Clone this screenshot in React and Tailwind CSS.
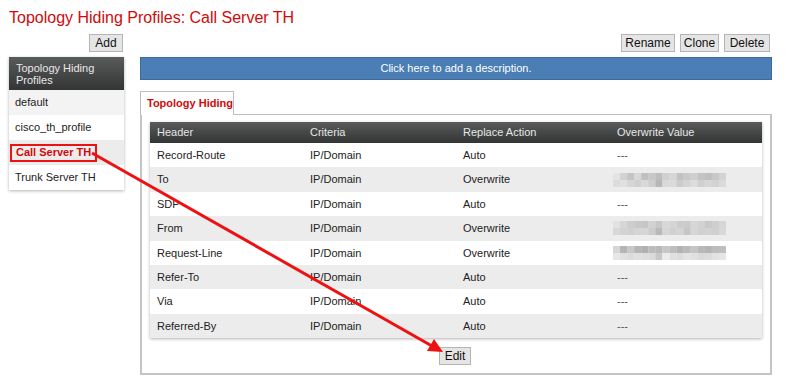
import React from "react";

const rows = [
  ["Record-Route", "IP/Domain", "Auto", "---"],
  ["To", "IP/Domain", "Overwrite", "blur1"],
  ["SDP", "IP/Domain", "Auto", "---"],
  ["From", "IP/Domain", "Overwrite", "blur2"],
  ["Request-Line", "IP/Domain", "Overwrite", "blur3"],
  ["Refer-To", "IP/Domain", "Auto", "---"],
  ["Via", "IP/Domain", "Auto", "---"],
  ["Referred-By", "IP/Domain", "Auto", "---"],
];

const palettes = {
  blur1: [
    "#e4e4e4#d2d2d2#c4c4c4#d8d8d8#c0c0c0#c8c8c8#bdbdbd#d0d0d0#d6d6d6#c2c2c2#c9c9c9#cfcfcf#c4c4c4#bfbfbf#c8c8c8#d3d3d3",
    "#dcdcdc#e0e0e0#d6d6d6#d0d0d0#d8d8d8#cecece#b8b8b8#d9d9d9#dadada#cccccc#d4d4d4#dcdcdc#d0d0d0#d6d6d6#d2d2d2#dadada",
  ],
  blur2: [
    "#e2e2e2#d6d6d6#cdcdcd#c8c8c8#c6c6c6#d2d2d2#c7c7c7#d8d8d8#d4d4d4#cccccc#cbcbcb#d6d6d6#d2d2d2#c9c9c9#cfcfcf#d6d6d6",
    "#d8d8d8#d2d2d2#d0d0d0#d4d4d4#d6d6d6#cccccc#b9b9b9#d6d6d6#d0d0d0#d4d4d4#c6c6c6#d6d6d6#d0d0d0#d2d2d2#d0d0d0#d8d8d8",
  ],
  blur3: [
    "#d6d6d6#b4b4b4#c8c8c8#b5b5b5#b0b0b0#bcbcbc#b8b8b8#c6c6c6#bdbdbd#b2b2b2#bababa#c4c4c4#b8b8b8#b4b4b4#bcbcbc#bfbfbf",
    "#e6e6e6#e0e0e0#dcdcdc#e0e0e0#dedede#dadada#c8c8c8#ececec#e0e0e0#dcdcdc#e4e4e4#e0e0e0#dadada#dcdcdc#e2e2e2#e6e6e6",
  ],
};

function Pixelated({ id }) {
  const lines = palettes[id].map((s) => s.split("#").filter(Boolean).map((c) => "#" + c));
  return (
    <svg width="113" height="14" viewBox="0 0 113 14" className="block">
      {lines.map((line, r) =>
        line.map((c, i) => (
          <rect key={r + "-" + i} x={i * 7.06} y={r * 7} width="7.2" height="7" fill={c} />
        ))
      )}
    </svg>
  );
}

function Btn({ children, className = "" }) {
  return (
    <div
      className={
        "h-[18px] flex items-center justify-center border border-[#b5b5b5] bg-[#e5e5e5] text-[12px] leading-none text-[#111] " +
        className
      }
    >
      {children}
    </div>
  );
}

export default function App() {
  return (
    <div
      className="relative w-[787px] h-[386px] bg-white overflow-hidden"
      style={{ fontFamily: '"Liberation Sans", Arial, sans-serif' }}
    >
      <div className="pl-[9px] pt-[7px] h-[34px] text-[16px] leading-[22px] text-[#d10a0a]">
        Topology Hiding Profiles: Call Server TH
      </div>
      <div className="flex">
        {/* left column */}
        <div className="ml-[9px] w-[115px] flex flex-col">
          <div className="flex justify-end pr-[1px]">
            <Btn className="w-[34px]">Add</Btn>
          </div>
          <div className="mt-[5px] shadow-[0_1px_3px_rgba(0,0,0,0.3)]">
            <div className="h-[33px] bg-gradient-to-b from-[#5a5c5c] to-[#333535] text-[#e8e8e8] text-[11px] leading-[12px] px-[7px] pt-[5px]">
              Topology Hiding Profiles
            </div>
            <div className="h-[25px] bg-[#f3f3f3] flex items-center px-[6px] text-[11px] text-[#222]">default</div>
            <div className="h-[25px] bg-white flex items-center px-[6px] text-[11px] text-[#222]">cisco_th_profile</div>
            <div className="h-[25px] bg-[#ececec] flex items-center pl-[1px] text-[11px]">
              <div className="border-2 border-[#ee1111] px-[4px] h-[18px] flex items-center font-bold text-[#d10a0a]">
                Call Server TH
              </div>
            </div>
            <div className="h-[25px] bg-white flex items-center px-[6px] text-[11px] text-[#222]">Trunk Server TH</div>
          </div>
        </div>
        {/* right column */}
        <div className="ml-[16px] w-[632px] flex flex-col">
          <div className="flex justify-end gap-[5px] pr-[2px]">
            <Btn className="w-[54px]">Rename</Btn>
            <Btn className="w-[39px]">Clone</Btn>
            <Btn className="w-[46px]">Delete</Btn>
          </div>
          <div className="mt-[5px] h-[23px] bg-[#4a7eb4] border border-[#3d6a99] flex items-center justify-center text-white text-[11px]">
            Click here to add a description.
          </div>
          <div className="mt-[10px] flex">
            <div className="w-[94px] h-[24px] border border-b-0 border-[#bdbdbd] bg-white flex items-center pl-[6px] text-[11px] font-bold text-[#d10a0a] relative top-[1px]">
              Topology Hiding
            </div>
          </div>
          <div className="h-[261px] border-2 border-t border-[#c4c4c4] border-t-[#bdbdbd] px-[8px] pt-[7px] flex flex-col">
            <div className="shadow-[0_1px_3px_rgba(0,0,0,0.3)] text-[11px] text-[#222]">
              <div className="h-[21px] flex items-center bg-gradient-to-b from-[#5a5c5c] to-[#333535] text-[#e6e6e6]">
                <div className="w-[153px] pl-[7px]">Header</div>
                <div className="w-[153px] pl-[7px]">Criteria</div>
                <div className="w-[154px] pl-[7px]">Replace Action</div>
                <div className="flex-1 pl-[7px]">Overwrite Value</div>
              </div>
              {rows.map((r, i) => (
                <div
                  key={r[0]}
                  className={"h-[24.4px] flex items-center " + (i % 2 === 0 ? "bg-white" : "bg-[#ececec]")}
                >
                  <div className="w-[153px] pl-[7px]">{r[0]}</div>
                  <div className="w-[153px] pl-[7px]">{r[1]}</div>
                  <div className="w-[154px] pl-[7px]">{r[2]}</div>
                  <div className="flex-1 pl-[3px]">
                    {r[3].startsWith("blur") ? (
                      <Pixelated id={r[3]} />
                    ) : (
                      <span className="pl-[4px] text-[#555]">{r[3]}</span>
                    )}
                  </div>
                </div>
              ))}
            </div>
            <div className="mt-[9px] flex justify-center pr-[2px]">
              <Btn className="w-[32px]">Edit</Btn>
            </div>
          </div>
        </div>
      </div>
      {/* annotation arrow */}
      <svg className="absolute left-0 top-0 pointer-events-none" width="787" height="386">
        <line x1="92" y1="153" x2="432" y2="346" stroke="#ee1111" strokeWidth="3" />
        <polygon points="443,352 427,351 434,339" fill="#ee1111" />
      </svg>
    </div>
  );
}
